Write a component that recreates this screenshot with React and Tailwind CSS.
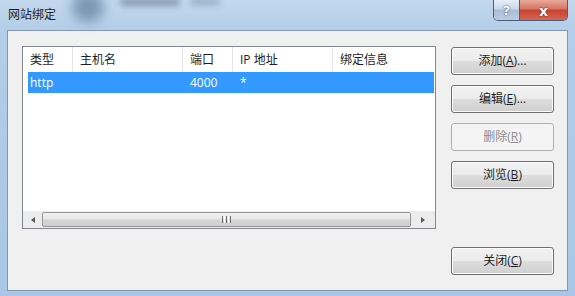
import React from 'react';

const font = "font-['Open_Sans','Noto_Sans_CJK_SC',sans-serif]";

const columns = [
	{ label: '类型', width: 'w-[50px]' },
	{ label: '主机名', width: 'w-[110px]' },
	{ label: '端口', width: 'w-[50px]' },
	{ label: 'IP 地址', width: 'w-[100px]' },
	{ label: '绑定信息', width: 'flex-1' },
];

const DialogButton = ({ children, disabled, className = '' }) => (
	<button
		type="button"
		disabled={disabled}
		className={`h-[28px] w-[103px] rounded-[3px] border text-[12px] leading-none ${
			disabled
				? 'border-[#adb2b5] bg-[#f4f4f4] text-[#8d8d8d]'
				: 'border-[#707070] bg-[linear-gradient(to_bottom,#f2f2f2_0%,#ebebeb_50%,#dddddd_51%,#cfcfcf_100%)] text-[#1e1e1e] shadow-[inset_0_0_0_1px_#fcfcfc]'
		} ${className}`}
	>
		{children}
	</button>
);

const App = () => {
	return (
		<div
			className={`relative flex h-[296px] w-[575px] flex-col overflow-hidden bg-[linear-gradient(to_bottom,#c3d8ee,#b4cde8_30px,#a9c6e6)] ${font}`}
		>
			{/* blurred stuff behind the glass */}
			<div className="absolute left-[72px] top-[-8px] h-[30px] w-[32px] rounded-full bg-[#5f7f9c] opacity-70 blur-[6px]"></div>
			<div className="absolute left-[120px] top-[-2px] h-[8px] w-[60px] rounded bg-[#4f6073] opacity-50 blur-[3px]"></div>
			<div className="absolute left-[190px] top-[-2px] h-[7px] w-[30px] rounded bg-[#5d7085] opacity-40 blur-[3px]"></div>

			{/* Title bar */}
			<div className="relative flex h-[30px] shrink-0 items-center pl-[8px]">
				<span className="text-[12px] text-[#1e1e1e]">网站绑定</span>
				<div className="absolute right-[7px] top-0 flex h-[21px] overflow-hidden rounded-b-[5px] border border-t-0 border-[#4a5f7a]">
					<div className="flex w-[26px] items-center justify-center border-r border-[#4a5f7a] bg-[linear-gradient(to_bottom,#e6eef7,#c9d8ea_45%,#a9bdd6_50%,#bccde2)]">
						<span className="text-[13px] font-bold leading-none text-white [text-shadow:0_0_2px_#2d3e55]">?</span>
					</div>
					<div className="flex w-[47px] items-center justify-center bg-[linear-gradient(to_bottom,#e9a99c,#d47563_45%,#c7432f_50%,#d4664f)]">
						<span className="text-[15px] font-bold leading-none text-white [text-shadow:0_0_2px_#5a1a10]">x</span>
					</div>
				</div>
			</div>

			{/* Client area */}
			<div className="mx-[7px] flex h-[261px] shrink-0 border border-[#8597b0] bg-[#f0f0f0] pl-[14px] pr-[13px] pt-[15px] pb-[15px]">
				{/* List view */}
				<div className="flex h-[183px] w-[414px] flex-col border border-[#828790] bg-white">
					<div className="flex h-[25px] shrink-0 text-[12px] text-[#1e1e1e]">
						{columns.map(col => (
							<div
								key={col.label}
								className={`${col.width} flex items-center border-r border-[#e5e5e5] pl-[7px] last:border-r-0`}
							>
								{col.label}
							</div>
						))}
					</div>
					<div className="ml-[5px] mr-[1px] flex h-[21px] items-center bg-[#3399ff] pt-[1px] text-[12px] text-white">
						<span className="w-[162px] pl-[2px]">http</span>
						<span className="w-[50px]">4000</span>
						<span>*</span>
					</div>
					<div className="flex-1"></div>

					{/* Horizontal scrollbar */}
					<div className="flex h-[17px] shrink-0 items-center bg-[#ececec]">
						<div className="flex h-full w-[19px] items-center justify-center">
							<div className="h-0 w-0 border-y-[3.5px] border-r-[4px] border-y-transparent border-r-[#5a5a5a]"></div>
						</div>
						<div className="flex h-[15px] flex-1 items-center justify-center rounded-[2px] border border-[#979797] bg-[linear-gradient(to_bottom,#f2f2f2,#e6e6e6_45%,#d5d5d5_55%,#cfcfcf)]">
							<div className="flex gap-[1px]">
								<span className="h-[7px] w-[1px] bg-[#6d6d6d]"></span>
								<span className="h-[7px] w-[1px] bg-white"></span>
								<span className="h-[7px] w-[1px] bg-[#6d6d6d]"></span>
								<span className="h-[7px] w-[1px] bg-white"></span>
								<span className="h-[7px] w-[1px] bg-[#6d6d6d]"></span>
							</div>
						</div>
						<div className="flex h-full w-[24px] items-center justify-center">
							<div className="h-0 w-0 border-y-[3.5px] border-l-[4px] border-y-transparent border-l-[#5a5a5a]"></div>
						</div>
					</div>
				</div>

				{/* Button column */}
				<div className="ml-[15px] flex flex-col gap-[10px] pt-[1px]">
					<DialogButton>
						添加(<u>A</u>)...
					</DialogButton>
					<DialogButton>
						编辑(<u>E</u>)...
					</DialogButton>
					<DialogButton disabled>
						删除(<u>R</u>)
					</DialogButton>
					<DialogButton>
						浏览(<u>B</u>)
					</DialogButton>
					<DialogButton className="mt-auto">
						关闭(<u>C</u>)
					</DialogButton>
				</div>
			</div>

			<div className="flex-1"></div>
		</div>
	);
};

export default App;
